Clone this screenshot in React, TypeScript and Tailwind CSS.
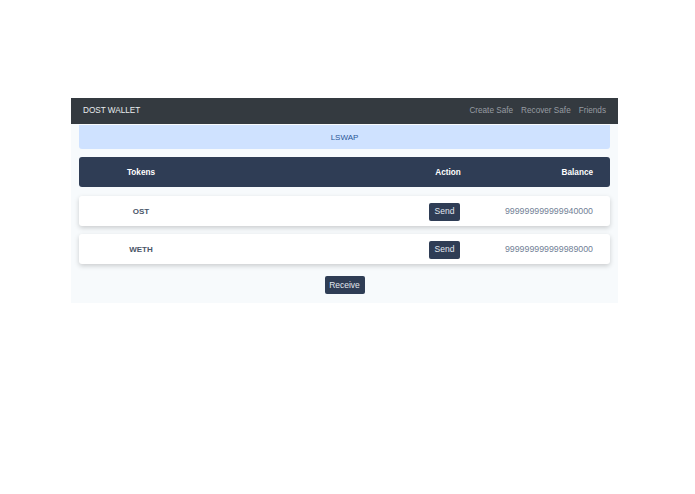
const tokens = [
  { symbol: 'OST', balance: '999999999999940000' },
  { symbol: 'WETH', balance: '999999999999989000' },
];

const Row = ({ symbol, balance }: { symbol: string; balance: string }) => (
  <div className="flex h-[30px] items-center rounded-[3px] bg-white pt-px shadow-[0_2px_5px_rgba(0,0,0,0.18)]">
    <div className="w-[124px] text-center text-[8px] font-bold text-[#4a5568]">{symbol}</div>
    <div className="flex-1" />
    <div className="flex w-[80px] justify-center">
      <button className="mr-[7px] h-[18px] w-[31px] rounded-[2px] bg-[#2f3d55] text-[8.5px] text-[#e2e8f0]">Send</button>
    </div>
    <div className="w-[105px] text-right text-[8.8px] text-[#718096]">{balance}</div>
    <div className="w-[17px]" />
  </div>
);

export default function App() {
  return (
    <div className="min-h-screen bg-white pt-[98px] font-['Liberation_Sans',Arial,sans-serif]">
      <div className="ml-[71px] w-[547px]">
        <nav className="flex h-[26px] items-center justify-between bg-[#343a40] px-3 pt-px text-[8.2px]">
          <span className="text-[#e9ecef]">DOST WALLET</span>
          <div className="flex gap-[8px] text-[#979ca2]">
            <span>Create Safe</span>
            <span>Recover Safe</span>
            <span>Friends</span>
          </div>
        </nav>
        <div className="flex flex-col bg-[#f7fafc] px-2 pb-[9px]">
          <div className="mt-px flex h-[24px] items-center justify-center rounded-b-[3px] bg-[#cfe2ff] pt-[2px] text-[8px] text-[#2b5797]">
            LSWAP
          </div>
          <div className="mt-[8px] flex h-[30px] items-center rounded-[3px] bg-[#2f3d55] pt-[2px] text-[8.2px] font-bold text-white">
            <div className="w-[124px] text-center">Tokens</div>
            <div className="flex-1" />
            <div className="w-[80px] text-center">Action</div>
            <div className="w-[105px] text-right">Balance</div>
            <div className="w-[17px]" />
          </div>
          <div className="mt-[9px] flex flex-col gap-[8px]">
            {tokens.map((t) => (
              <Row key={t.symbol} {...t} />
            ))}
          </div>
          <div className="mt-[12px] flex justify-center">
            <button className="h-[18px] w-[40px] rounded-[2px] bg-[#2f3d55] text-[8.5px] text-[#e2e8f0]">Receive</button>
          </div>
        </div>
      </div>
    </div>
  );
}
